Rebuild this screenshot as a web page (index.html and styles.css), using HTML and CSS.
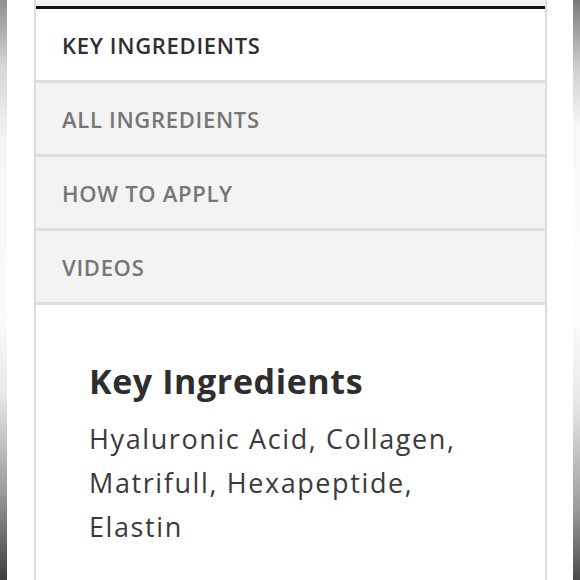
FILE: index.html
```html
<!DOCTYPE html>
<html lang="en">
<head>
<meta charset="utf-8">
<link rel="stylesheet" href="styles.css">
</head>
<body>
<div class="page">
  <div class="strip strip-left"></div>
  <main class="panel">
    <div class="panel-top"></div>
    <nav class="tabs">
      <div class="tab active">KEY INGREDIENTS</div>
      <div class="tab">ALL INGREDIENTS</div>
      <div class="tab">HOW TO APPLY</div>
      <div class="tab">VIDEOS</div>
    </nav>
    <section class="content">
      <h2 class="title">Key Ingredients</h2>
      <p class="text">Hyaluronic Acid, Collagen, Matrifull, Hexapeptide, Elastin</p>
    </section>
  </main>
  <div class="strip strip-right"></div>
</div>
</body>
</html>
```
FILE: styles.css
```css
html, body {
  margin: 0;
  padding: 0;
  background: #fff;
  height: 580px;
  overflow: hidden;
}
.page {
  display: flex;
  height: 580px;
  font-family: "Open Sans", "Liberation Sans", sans-serif;
}
.strip {
  width: 7px;
  flex: none;
}
.strip-left {
  background: linear-gradient(to bottom, #8f8f8f 0%, #d8d8d8 12%, #f6f6f6 25%, #fbfbfb 55%, #e8e8e8 68%, #9a9a9a 85%, #3e3e3e 100%);
}
.strip-right {
  margin-left: 26px;
  background: linear-gradient(to bottom, #7a7a7a 0%, #d0d0d0 12%, #f8f8f8 22%, #fcfcfc 55%, #e6e6e6 70%, #9a9a9a 88%, #4a4a4a 100%);
}
.panel {
  margin-left: 27px;
  width: 509px;
  border-left: 2px solid #dcdcdc;
  border-right: 2px solid #dcdcdc;
  display: flex;
  flex-direction: column;
}
.panel-top {
  height: 6px;
  background: #f2f2f2;
  border-bottom: 3px solid #111;
}
.tabs {
  display: flex;
  flex-direction: column;
}
.tab {
  height: 71px;
  display: flex;
  align-items: center;
  padding-left: 26px;
  background: #f3f3f3;
  border-bottom: 3px solid #dedede;
  font-size: 22px;
  font-weight: 600;
  letter-spacing: 0.7px;
  color: #767676;
}
.tab.active {
  background: #fff;
  color: #303030;
}
.content {
  background: #fff;
  padding: 54px 26px 0 53px;
}
.title {
  margin: 0;
  font-size: 34px;
  font-weight: 700;
  letter-spacing: 0.6px;
  color: #2e2e2e;
  line-height: 44px;
}
.text {
  margin: 14px 0 0;
  font-size: 27px;
  font-weight: 400;
  letter-spacing: 1.6px;
  line-height: 44px;
  color: #3a3a3a;
  width: 400px;
}
```
